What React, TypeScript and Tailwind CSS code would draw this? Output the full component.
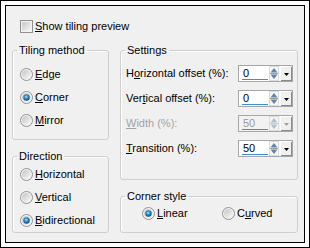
import React, { useId } from 'react';

function Radio({ checked }: { checked?: boolean }) {
  const id = useId().replace(/:/g, '');
  return (
    <svg width="13" height="13" viewBox="0 0 13 13" className="shrink-0">
      <defs>
        <linearGradient id={`f${id}`} x1="0" y1="0" x2="1" y2="1">
          <stop offset="0" stopColor="#c4c4c4" />
          <stop offset="1" stopColor="#fafafa" />
        </linearGradient>
        <radialGradient id={`d${id}`} cx="0.45" cy="0.4" r="0.65">
          <stop offset="0" stopColor="#a6e6ff" />
          <stop offset="0.45" stopColor="#2b8ccc" />
          <stop offset="1" stopColor="#0a3a66" />
        </radialGradient>
      </defs>
      <circle cx="6.5" cy="6.5" r="6" fill="#f3f3f3" stroke="#929292" />
      <circle cx="6.5" cy="6.5" r="4.5" fill={`url(#f${id})`} />
      {checked && <circle cx="6.5" cy="6.5" r="3.2" fill={`url(#d${id})`} />}
    </svg>
  );
}

function Checkbox() {
  const id = useId().replace(/:/g, '');
  return (
    <svg width="13" height="13" viewBox="0 0 13 13" className="shrink-0">
      <defs>
        <linearGradient id={`c${id}`} x1="0" y1="0" x2="1" y2="1">
          <stop offset="0" stopColor="#c8c8c8" />
          <stop offset="1" stopColor="#f7f7f7" />
        </linearGradient>
      </defs>
      <rect x="0.5" y="0.5" width="12" height="12" fill="#f4f4f4" stroke="#8f8f8f" />
      <rect x="2" y="2" width="9" height="9" fill={`url(#c${id})`} />
    </svg>
  );
}

function Group({ title, className, children }: { title: string; className?: string; children: React.ReactNode }) {
  return (
    <fieldset className={`border border-[#cfcfcf] rounded-[3px] shadow-[inset_1px_1px_0_#ffffff] ${className ?? ''}`}>
      <legend className="ml-[4px] px-[2px] leading-[13px]">{title}</legend>
      {children}
    </fieldset>
  );
}

function RadioRow({ checked, children, h = 'h-[23px]' }: { checked?: boolean; children: React.ReactNode; h?: string }) {
  return (
    <div className={`flex items-center gap-[2px] ${h}`}>
      <Radio checked={checked} />
      <span className="leading-[13px]">{children}</span>
    </div>
  );
}

function Spin({ value, disabled }: { value: string; disabled?: boolean }) {
  const arrow = disabled ? '#b4bec8' : '#5f84ae';
  return (
    <div className="flex h-[17px] w-[55px] border border-[#a5a7ab]">
      <div className={`flex-1 flex ${disabled ? 'bg-[#f2f2f2]' : 'bg-white'}`}>
        <div className="flex-1 flex flex-col pl-[4px] pt-[2px]">
          <span className={`leading-[11px] ${disabled ? 'text-[#9a9a9a]' : 'text-black'}`}>{value}</span>
          <div className="mt-auto mb-[1px] ml-[-1px] h-[2px] w-[26px] bg-[#3b8de0]" />
        </div>
        <svg width="10" height="15" viewBox="0 0 10 15" className="shrink-0 mr-[1px]">
          <rect x="0.5" y="0.5" width="9" height="14" fill={disabled ? '#f4f4f4' : '#f5f7f9'} stroke="#dcdcdc" />
          <polygon points="1.5,6.5 5,2 8.5,6.5" fill={arrow} />
          <line x1="1" y1="7.5" x2="9" y2="7.5" stroke={disabled ? '#cfcfcf' : '#a39f86'} />
          <polygon points="1.5,8.5 5,13 8.5,8.5" fill={arrow} />
        </svg>
      </div>
      <div className="w-[12px] flex items-center justify-center bg-[#f0f0f0] border-l border-t border-white shadow-[inset_-1px_-1px_0_#8a8a8a]">
        <svg width="5" height="3" viewBox="0 0 5 3">
          <polygon points="0,0 5,0 2.5,3" fill={disabled ? '#a0a0a0' : '#000000'} />
        </svg>
      </div>
    </div>
  );
}

function SettingRow({ label, value, disabled }: { label: React.ReactNode; value: string; disabled?: boolean }) {
  return (
    <div className="flex h-[17px] items-center justify-between">
      <span className={`leading-[13px] ${disabled ? 'text-[#a3a3a3]' : ''}`}>{label}</span>
      <Spin value={value} disabled={disabled} />
    </div>
  );
}

export default function App() {
  return (
    <div className="w-[310px] h-[248px] bg-white border border-black p-[4px] font-['Liberation_Sans',Arial,sans-serif] text-[11px] text-black">
      <div className="h-full border border-black bg-[#f0f0f0] px-[6px] flex flex-col">
        <label className="mt-[14px] ml-[8px] flex h-[13px] items-center gap-[2px]">
          <Checkbox />
          <span className="leading-[13px]">
            <u>S</u>how tiling preview
          </span>
        </label>

        <div className="mt-[11px] flex gap-[11px]">
          <div className="w-[97px] flex flex-col gap-[10px]">
            <Group title="Tiling method" className="h-[96px]">
              <div className="pt-[6px] pl-[7px] flex flex-col">
                <RadioRow><u>E</u>dge</RadioRow>
                <RadioRow checked><u>C</u>orner</RadioRow>
                <RadioRow><u>M</u>irror</RadioRow>
              </div>
            </Group>
            <Group title="Direction" className="h-[83px]">
              <div className="pl-[7px] flex flex-col">
                <RadioRow><u>H</u>orizontal</RadioRow>
                <RadioRow><u>V</u>ertical</RadioRow>
                <RadioRow checked><u>B</u>idirectional</RadioRow>
              </div>
            </Group>
          </div>

          <div className="flex-1 flex flex-col gap-[10px]">
            <Group title="Settings" className="h-[136px]">
              <div className="pt-[8px] pl-[5px] pr-[4px] flex flex-col gap-[8px]">
                <SettingRow label={<>H<u>o</u>rizontal offset (%):</>} value="0" />
                <SettingRow label={<>Ver<u>t</u>ical offset (%):</>} value="0" />
                <SettingRow label={<><u>W</u>idth (%):</>} value="50" disabled />
                <SettingRow label={<><u>T</u>ransition (%):</>} value="50" />
              </div>
            </Group>
            <Group title="Corner style" className="h-[43px]">
              <div className="pl-[21px] flex">
                <div className="w-[80px]">
                  <RadioRow checked h="h-[21px]"><u>L</u>inear</RadioRow>
                </div>
                <RadioRow h="h-[21px]">C<u>u</u>rved</RadioRow>
              </div>
            </Group>
          </div>
        </div>
      </div>
    </div>
  );
}
